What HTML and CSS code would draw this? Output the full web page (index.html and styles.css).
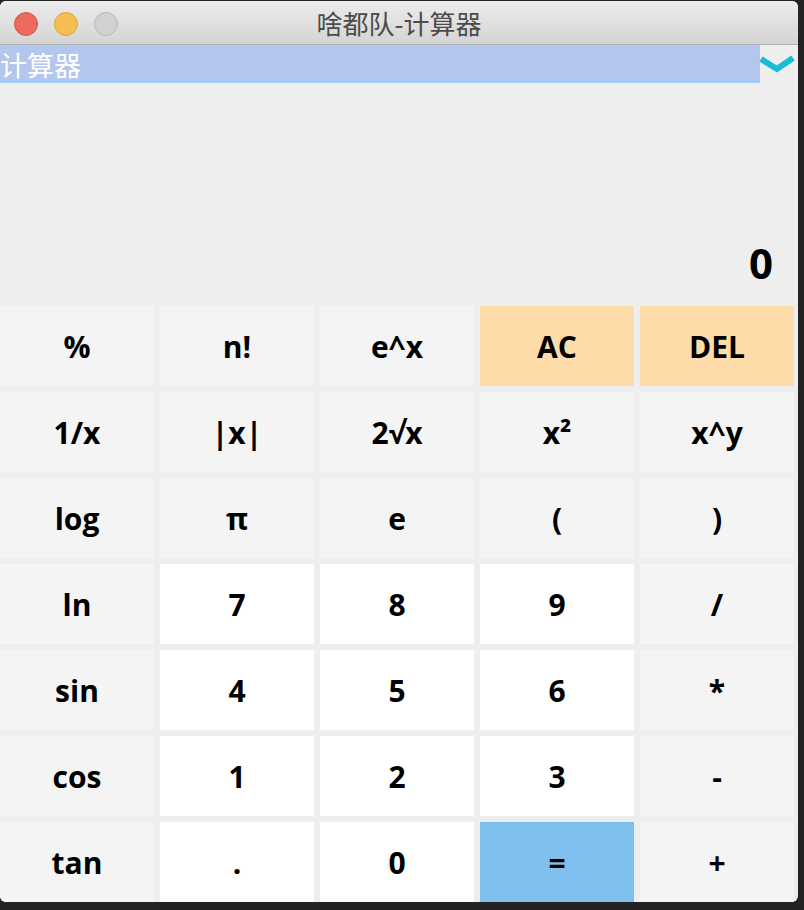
FILE: index.html
```html
<!DOCTYPE html>
<html lang="zh">
<head>
<meta charset="utf-8">
<title>啥都队-计算器</title>
<link rel="stylesheet" href="styles.css">
</head>
<body>
<div class="window">
  <div class="titlebar">
    <div class="lights">
      <span class="light red"></span>
      <span class="light yellow"></span>
      <span class="light gray"></span>
    </div>
    <div class="title">啥都队-计算器</div>
  </div>
  <div class="combo-row">
    <div class="combo">计算器</div>
    <svg class="chevron" width="36" height="22" viewBox="0 0 36 22"><polyline points="2,5 18,15 34,4" fill="none" stroke="#16bcd8" stroke-width="6" stroke-linejoin="miter"/></svg>
  </div>
  <div class="display"><span class="value">0</span></div>
  <div class="keys">
    <button class="key fn">%</button>
    <button class="key fn">n!</button>
    <button class="key fn">e^x</button>
    <button class="key warn">AC</button>
    <button class="key warn">DEL</button>

    <button class="key fn">1/x</button>
    <button class="key fn">|x|</button>
    <button class="key fn">2√x</button>
    <button class="key fn">x²</button>
    <button class="key fn">x^y</button>

    <button class="key fn">log</button>
    <button class="key fn">π</button>
    <button class="key fn">e</button>
    <button class="key fn">(</button>
    <button class="key fn">)</button>

    <button class="key fn">ln</button>
    <button class="key num">7</button>
    <button class="key num">8</button>
    <button class="key num">9</button>
    <button class="key fn">/</button>

    <button class="key fn">sin</button>
    <button class="key num">4</button>
    <button class="key num">5</button>
    <button class="key num">6</button>
    <button class="key fn">*</button>

    <button class="key fn">cos</button>
    <button class="key num">1</button>
    <button class="key num">2</button>
    <button class="key num">3</button>
    <button class="key fn">-</button>

    <button class="key fn">tan</button>
    <button class="key num">.</button>
    <button class="key num">0</button>
    <button class="key eq">=</button>
    <button class="key fn">+</button>
  </div>
</div>
</body>
</html>
```
FILE: styles.css
```css
html, body {
  margin: 0;
  padding: 0;
  background: #232323;
  height: 910px;
  overflow: hidden;
}
body {
  padding-top: 1px;
  font-family: "Open Sans", "Noto Sans", "Noto Sans CJK SC", sans-serif;
}
.window {
  width: 798px;
  height: 901px;
  background: #eeeeee;
  border-radius: 6px;
  overflow: hidden;
  display: flex;
  flex-direction: column;
}
.titlebar {
  height: 43px;
  flex: none;
  background: linear-gradient(#ececec, #d4d4d4);
  border-bottom: 1px solid #b1b1b1;
  display: flex;
  align-items: center;
  justify-content: center;
  position: relative;
}
.lights {
  position: absolute;
  left: 14px;
  top: 11px;
  display: flex;
  gap: 16px;
}
.light {
  width: 24px;
  height: 24px;
  border-radius: 50%;
  box-sizing: border-box;
}
.red { background: #ee6a5f; border: 1px solid #d5554b; }
.yellow { background: #f6be50; border: 1px solid #dca53a; }
.gray { background: #d1d1d1; border: 1px solid #b9b9b9; }
.title {
  font-family: "Noto Sans CJK SC", sans-serif;
  font-size: 26px;
  color: #4b4b4b;
  line-height: 1;
  margin-top: 1px;
}
.combo-row {
  height: 39px;
  flex: none;
  display: flex;
  align-items: flex-start;
}
.combo {
  width: 760px;
  height: 35px;
  background: #b3c6ee;
  border-bottom: 3px solid #a3cbf7;
  margin-bottom: 1px;
  color: #ffffff;
  font-family: "Noto Sans CJK SC", sans-serif;
  font-size: 27px;
  line-height: 40px;
  overflow: hidden;
}
.chevron {
  margin-top: 9px;
  margin-left: -1px;
}
.display {
  height: 222px;
  flex: none;
  display: flex;
  align-items: flex-end;
  justify-content: flex-end;
  padding-right: 25px;
  box-sizing: border-box;
}
.value {
  font-family: "Open Sans", sans-serif;
  font-weight: 700;
  font-size: 42px;
  line-height: 1;
  color: #000;
  margin-bottom: 22px;
}
.keys {
  display: grid;
  grid-template-columns: repeat(5, 154px);
  grid-auto-rows: 80px;
  gap: 6px;
}
.key {
  border: none;
  margin: 0;
  padding: 0;
  font-family: "Open Sans", "Noto Sans", sans-serif;
  font-weight: 700;
  font-size: 30px;
  color: #000;
  display: flex;
  align-items: center;
  justify-content: center;
}
.fn { background: #f4f4f4; }
.num { background: #ffffff; }
.warn { background: #fddcaa; }
.eq { background: #7fbfed; }
```
